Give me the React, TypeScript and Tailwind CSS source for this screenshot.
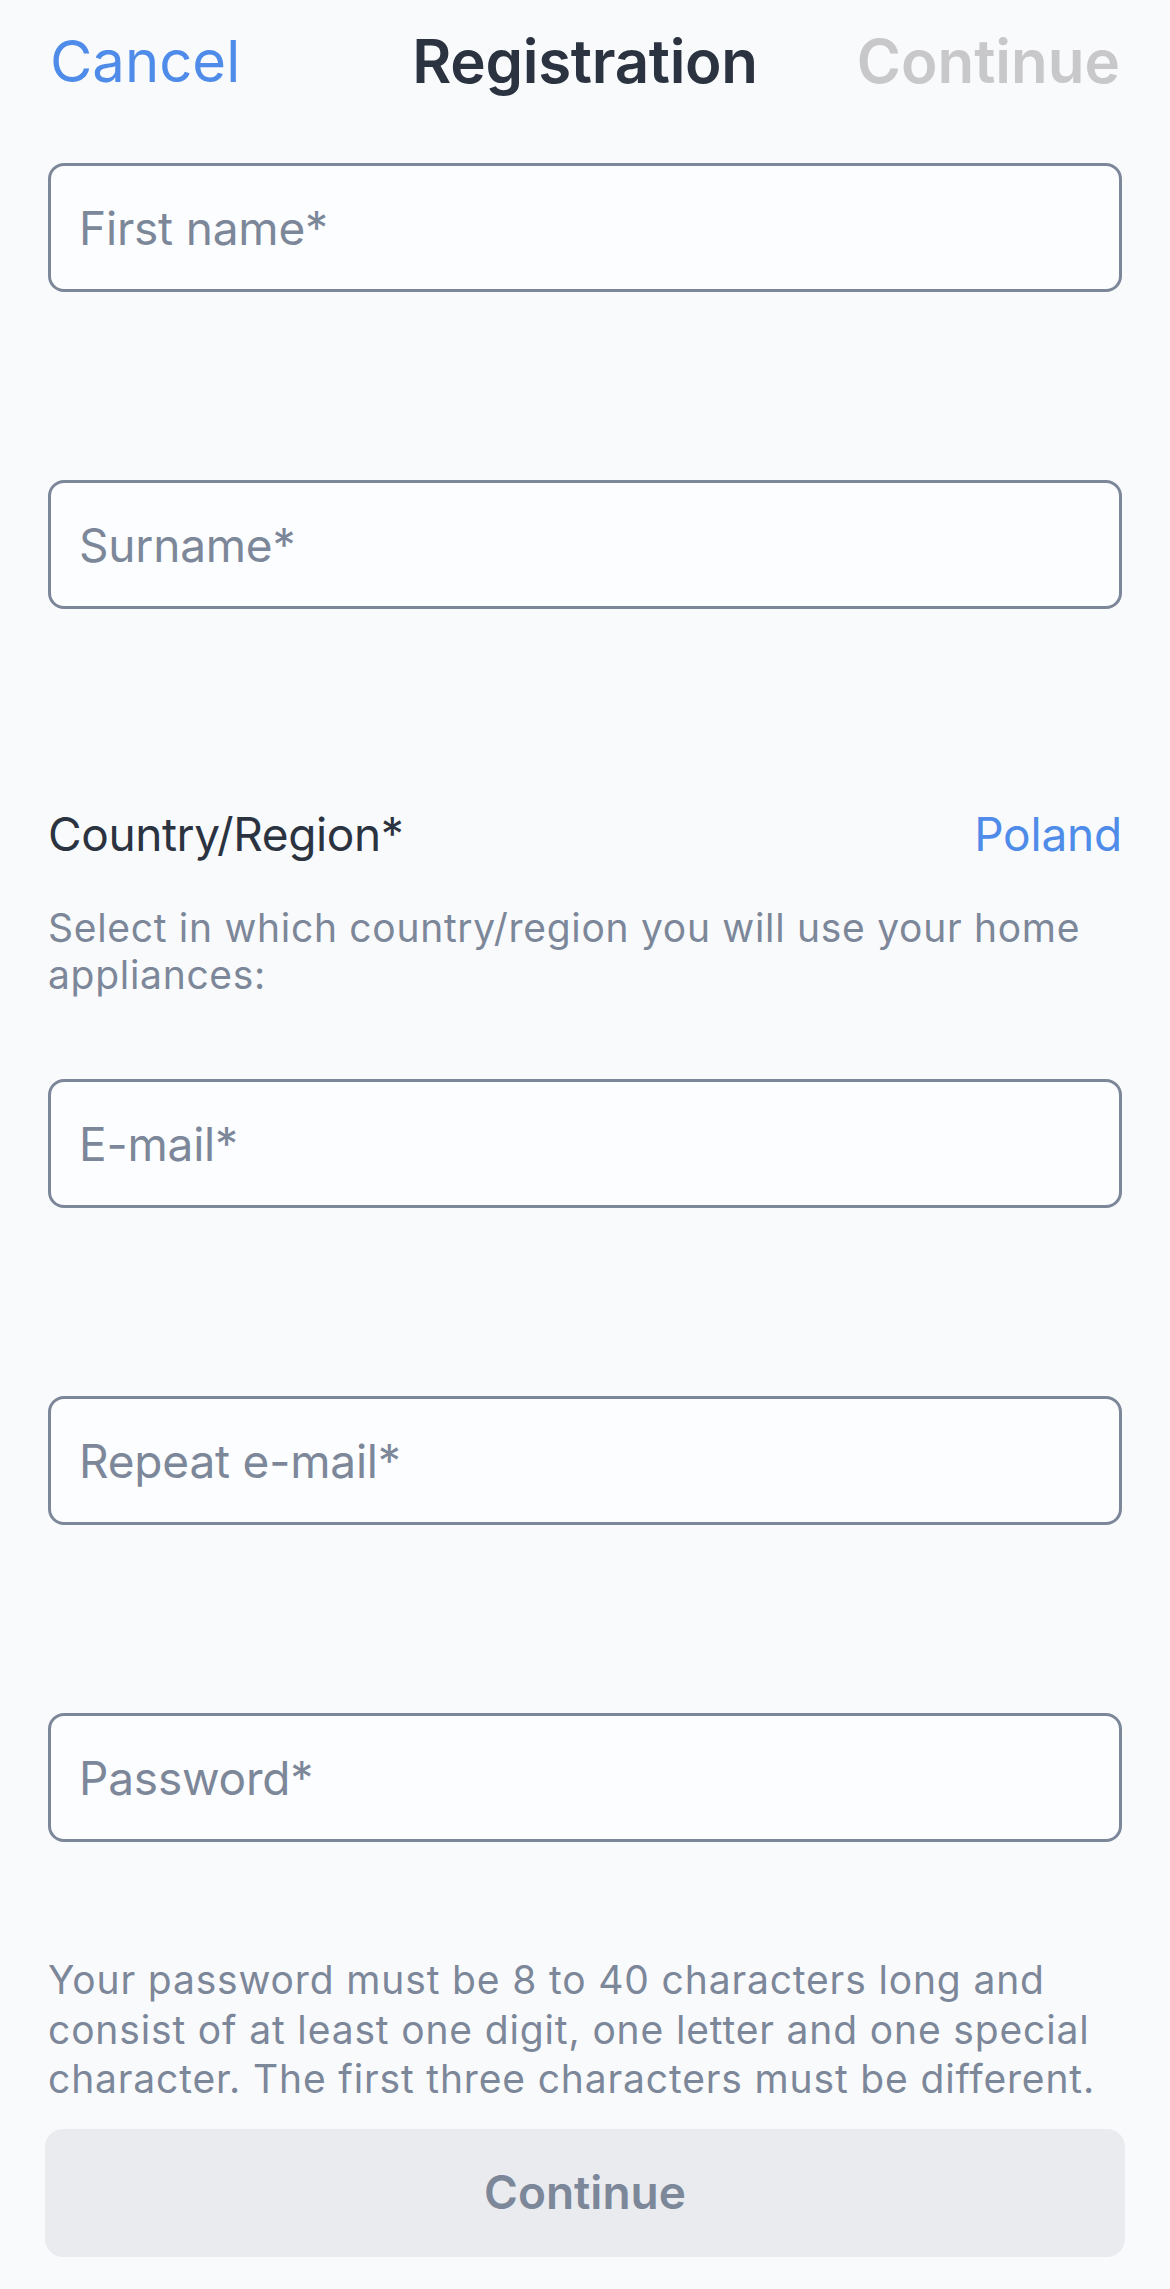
import { useState } from 'react'

const fieldClass =
  'block h-[129px] w-full rounded-[16px] border-[3px] border-[#7c8799] bg-[#fcfdfe] px-[28px] text-[46px] tracking-[-0.2px] text-[#2b3340] placeholder:text-[#7c8799] outline-none'

function Field({ placeholder, type = 'text', className = '' }: { placeholder: string; type?: string; className?: string }) {
  const [value, setValue] = useState('')
  return (
    <input
      className={`${fieldClass} ${className}`}
      type={type}
      placeholder={placeholder}
      value={value}
      onChange={(event) => setValue(event.target.value)}
    />
  )
}

export default function App() {
  return (
    <div className="min-h-[2289px] w-[1170px] bg-[#f9fafc] font-['Inter','Noto_Sans',sans-serif] antialiased">
      <header className="grid h-[122px] grid-cols-[1fr_auto_1fr] items-center px-[50px]">
        <button className="justify-self-start text-[58px] leading-none text-[#4f8be8]" type="button">
          Cancel
        </button>
        <h1 className="text-[60px] font-semibold leading-none tracking-[-0.3px] text-[#2b3340]">Registration</h1>
        <button className="justify-self-end text-[60px] font-semibold leading-none text-[#c8c8ca]" type="button" disabled>
          Continue
        </button>
      </header>

      <form className="px-[48px] pt-[41px]" onSubmit={(event) => event.preventDefault()}>
        <Field placeholder="First name*" />
        <Field placeholder="Surname*" className="mt-[188px]" />

        <div className="mt-[197px] flex items-center justify-between">
          <span className="text-[46px] leading-[56px] tracking-[-0.4px] text-[#2b3340]">Country/Region*</span>
          <button className="text-[46px] leading-[56px] tracking-[-0.2px] text-[#4f8be8]" type="button">
            Poland
          </button>
        </div>
        <p className="mt-[42px] text-[39px] leading-[47px] tracking-[0.7px] text-[#7c8799]">
          Select in which country/region you will use your home appliances:
        </p>

        <Field placeholder="E-mail*" type="email" className="mt-[81px]" />
        <Field placeholder="Repeat e-mail*" type="email" className="mt-[188px]" />
        <Field placeholder="Password*" type="password" className="mt-[188px]" />

        <p className="mt-[113px] text-[39px] leading-[49.5px] tracking-[0.85px] text-[#7c8799]">
          Your password must be 8 to 40 characters long and consist of at least one digit, one letter and one special
          character. The first three characters must be different.
        </p>

        <button
          className="-mx-[3px] mt-[25px] block h-[128px] w-[calc(100%+6px)] rounded-[18px] bg-[#e9ebef] text-[46px] font-semibold text-[#7c8799]"
          type="submit"
          disabled
        >
          Continue
        </button>
      </form>
    </div>
  )
}
